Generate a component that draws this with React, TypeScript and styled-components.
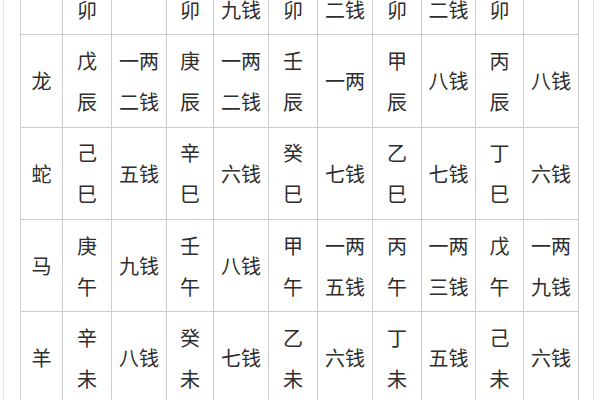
import React from 'react'
import styled, { createGlobalStyle } from 'styled-components'

const GlobalStyle = createGlobalStyle`
  html, body {
    margin: 0;
    padding: 0;
    background: #ffffff;
    overflow: hidden;
  }
`

const Page = styled.div`
  width: 591px;
  height: 400px;
  margin-left: 3px;
  padding-left: 16px;
  box-sizing: border-box;
  border-left: 1px solid #e4e4e4;
  border-right: 1px solid #e4e4e4;
  overflow: hidden;
`

const Table = styled.table`
  border-collapse: collapse;
  table-layout: fixed;
  width: 559px;
  margin-top: -58px;
  font-family: 'Noto Sans CJK SC', 'Noto Sans', sans-serif;
  font-size: 20px;
  color: #2e2e2e;
`

const Row = styled.tr`
  height: 92.3px;
`

const Cell = styled.td<{ $w: number }>`
  width: ${(p) => p.$w}px;
  padding: 0;
  border: 1px solid #cdcdcd;
  text-align: center;
  vertical-align: middle;
`

const Line = styled.div`
  line-height: 41px;
  white-space: nowrap;
`

// column widths measured between grid lines
const widths = [42, 49, 55, 47, 55, 49, 55, 49, 54, 48, 55]

const rows: string[][] = [
  ['兔', '丁卯', '七钱', '己卯', '一两九钱', '辛卯', '一两二钱', '癸卯', '一两二钱', '乙卯', '八钱'],
  ['龙', '戊辰', '一两二钱', '庚辰', '一两二钱', '壬辰', '一两', '甲辰', '八钱', '丙辰', '八钱'],
  ['蛇', '己巳', '五钱', '辛巳', '六钱', '癸巳', '七钱', '乙巳', '七钱', '丁巳', '六钱'],
  ['马', '庚午', '九钱', '壬午', '八钱', '甲午', '一两五钱', '丙午', '一两三钱', '戊午', '一两九钱'],
  ['羊', '辛未', '八钱', '癸未', '七钱', '乙未', '六钱', '丁未', '五钱', '己未', '六钱'],
]

// ganzhi columns stack one char per line, weight columns two chars per line
const split = (text: string, col: number) => {
  if (col === 0) return [text]
  const size = col % 2 === 1 ? 1 : 2
  const out: string[] = []
  for (let i = 0; i < text.length; i += size) out.push(text.slice(i, i + size))
  return out
}

const App: React.FC = () => {
  return (
    <>
      <GlobalStyle />
      <Page>
        <Table>
          <colgroup>
            {widths.map((w, i) => (
              <col key={i} style={{ width: w }} />
            ))}
          </colgroup>
          <tbody>
            {rows.map((row, r) => (
              <Row key={r}>
                {row.map((text, c) => (
                  <Cell key={c} $w={widths[c] - 1}>
                    {split(text, c).map((line, i) => (
                      <Line key={i}>{line}</Line>
                    ))}
                  </Cell>
                ))}
              </Row>
            ))}
          </tbody>
        </Table>
      </Page>
    </>
  )
}

export default App
